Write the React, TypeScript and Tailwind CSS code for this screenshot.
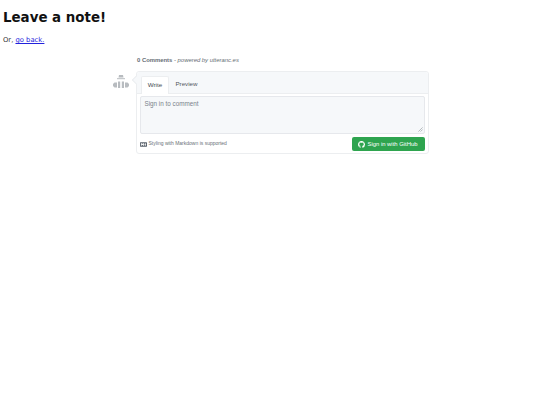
export default function App() {
  return (
    <div className="min-h-[405px] bg-white text-[#111] font-['DejaVu_Sans',sans-serif]">
      <div className="px-[3px]">
        <h1 className="pt-[9px] text-[13.400px] leading-[18px] font-bold">Leave a note!</h1>
        <p className="mt-[7px] text-[6.800px] leading-[12px] text-[#333]">
          Or, <a href="#" className="text-[#2222dd] underline">go back.</a>
        </p>
      </div>
      <div className="ml-[113px] mt-[7px] w-[316px] font-['Liberation_Sans',sans-serif]">
        <div className="pl-[24px] h-[14px] text-[5.900px] leading-[14px] text-[#666d74]">
          <strong className="font-bold">0 Comments</strong> <em>- powered by utteranc.es</em>
        </div>
        <div className="mt-[4px] flex items-start">
          <svg viewBox="0 0 16 16" className="mt-[3px] h-[16px] w-[16px] shrink-0 text-[#b8bcc0]" fill="currentColor">
            <path d="M6 1h4l.5 2.500h-5z" />
            <rect x="4" y="4.200" width="8" height="1" />
            <path d="M0 10l1.500-1.500H4v5H1.500L0 12z" />
            <path d="M16 10l-1.500-1.500H12v5h2.500L16 12z" />
            <rect x="5" y="7.500" width="2.200" height="6.500" />
            <rect x="8.800" y="7.500" width="2.200" height="6.500" />
          </svg>
          <div className="relative ml-[7px] h-[83px] w-[292.500px] rounded-[3px] border border-[#eceef0] bg-white">
            <div className="absolute -left-[4px] top-[5px] h-[6px] w-[6px] rotate-45 border-b border-l border-[#eceef0] bg-[#f6f8fa]" />
            <div className="relative flex h-[22px] items-end rounded-t-[3px] border-b border-[#eceef0] bg-[#f6f8fa] pl-[4px] text-[6.200px] text-[#444a50]">
              <div className="-mb-px flex h-[18px] w-[28px] items-center justify-center rounded-t-[2px] border-x border-t border-[#eceef0] bg-white pb-[1px]">Write</div>
              <div className="flex h-[17px] w-[35px] items-center justify-center pb-[1px] text-[#50575e]">Preview</div>
            </div>
            <div className="px-[3px] pt-[2px]">
              <div className="relative h-[38px] rounded-[2px] border border-[#e6e8ec] bg-[#f6f8fa] px-[3.500px] py-[2px] text-[6.300px] leading-[10px] text-[#7a828a]">
                Sign in to comment
                <svg viewBox="0 0 6 6" className="absolute bottom-[1px] right-[1px] h-[5px] w-[5px]" stroke="#8a9096" strokeWidth="0.7">
                  <path d="M0.500 5.500 5.500 0.500M3 5.500 5.500 3" />
                </svg>
              </div>
              <div className="mt-[3px] flex h-[14px] items-center justify-between">
                <div className="flex items-center gap-[1.500px] text-[5px] text-[#6a7178]">
                  <svg viewBox="0 0 16 16" className="h-[7px] w-[7px]" fill="#586069">
                    <path fillRule="evenodd" d="M14.850 3H1.150C.52 3 0 3.520 0 4.150v7.690C0 12.480.52 13 1.150 13h13.690c.64 0 1.150-.52 1.150-1.150v-7.700C16 3.520 15.480 3 14.850 3zM9 11H7V8L5.500 9.920 4 8v3H2V5h2l1.500 2L7 5h2v6zm2.990.5L9.500 8H11V5h2v3h1.500l-2.510 3.500z" />
                  </svg>
                  <span>Styling with Markdown is supported</span>
                </div>
                <div className="flex h-[14px] w-[73px] items-center justify-center gap-[2px] rounded-[2px] bg-[#2ea44f] text-[5.900px] text-white">
                  <svg viewBox="0 0 16 16" className="h-[7px] w-[7px]" fill="currentColor">
                    <path fillRule="evenodd" d="M8 0C3.580 0 0 3.580 0 8c0 3.540 2.290 6.530 5.470 7.590.4.070.55-.17.55-.38 0-.19-.01-.82-.01-1.490-2.010.37-2.530-.49-2.690-.94-.09-.23-.48-.94-.82-1.130-.28-.15-.68-.52-.01-.53.63-.01 1.080.58 1.230.82.720 1.210 1.870.870 2.330.660.070-.520.280-.870.510-1.070-1.780-.2-3.640-.890-3.640-3.950 0-.870.310-1.590.820-2.150-.080-.2-.360-1.020.080-2.120 0 0 .670-.210 2.200.820.640-.180 1.320-.270 2-.270s1.360.090 2 .270c1.530-1.040 2.200-.820 2.200-.820.440 1.100.160 1.920.080 2.120.510.560.820 1.270.820 2.150 0 3.070-1.870 3.750-3.650 3.950.290.250.540.730.540 1.480 0 1.070-.010 1.930-.010 2.200 0 .210.150.460.550.380A8.010 8.010 0 0016 8c0-4.420-3.580-8-8-8z" />
                  </svg>
                  <span>Sign in with GitHub</span>
                </div>
              </div>
            </div>
          </div>
        </div>
      </div>
    </div>
  );
}
